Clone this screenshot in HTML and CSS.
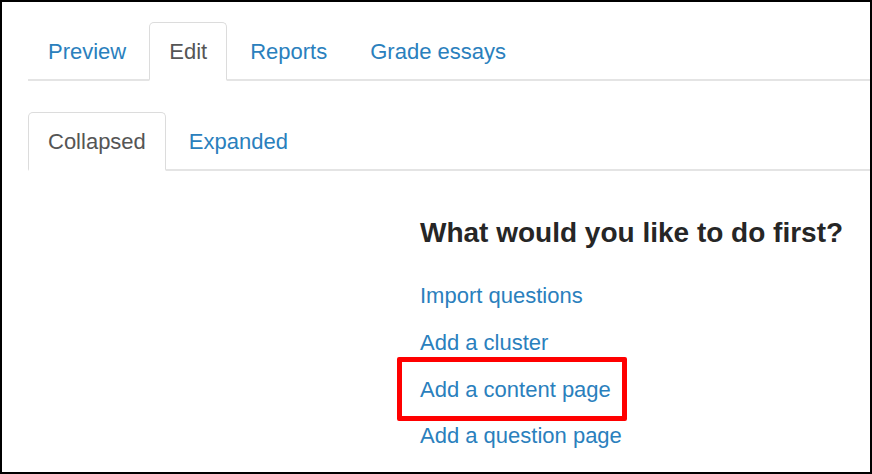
FILE: index.html
```html
<!DOCTYPE html>
<html lang="en">
<head>
<meta charset="utf-8">
<title>Lesson edit</title>
<link rel="stylesheet" href="styles.css">
</head>
<body>
<div class="frame">
  <ul class="tabs tabs-main">
    <li><a class="tab" href="#">Preview</a></li>
    <li><a class="tab active" href="#">Edit</a></li>
    <li><a class="tab" href="#">Reports</a></li>
    <li><a class="tab" href="#">Grade essays</a></li>
  </ul>
  <ul class="tabs tabs-sub">
    <li><a class="tab active" href="#">Collapsed</a></li>
    <li><a class="tab" href="#">Expanded</a></li>
  </ul>
  <div class="layout">
    <div class="side"></div>
    <div class="main">
      <h2 class="title">What would you like to do first?</h2>
      <div class="actions">
        <a class="action" href="#">Import questions</a>
        <a class="action" href="#">Add a cluster</a>
        <a class="action marked" href="#">Add a content page<span class="highlight"></span></a>
        <a class="action" href="#">Add a question page</a>
      </div>
    </div>
  </div>
</div>
</body>
</html>
```
FILE: styles.css
```css
html, body {
  margin: 0;
  padding: 0;
  background: #fff;
}

.frame {
  box-sizing: border-box;
  width: 872px;
  height: 474px;
  border: 2px solid #000;
  padding: 20px 0 0 26px;
  font-family: "Liberation Sans", Arial, sans-serif;
  overflow: hidden;
}

.tabs {
  list-style: none;
  margin: 0;
  padding: 0;
  display: flex;
  border-bottom: 2px solid #e4e4e4;
}

.tabs li {
  margin: 0 3px -2px 0;
}

.tabs-sub {
  margin-top: 31px;
}

.tab {
  display: block;
  padding: 12px 19px 11px;
  font-size: 22px;
  line-height: 33px;
  color: #2a80bd;
  text-decoration: none;
  border: 1px solid transparent;
  border-bottom: 2px solid transparent;
  border-radius: 5px 5px 0 0;
}

.tab.active {
  color: #555;
  border-color: #dcdcdc;
  border-bottom-color: #fff;
  background: #fff;
}

.layout {
  display: grid;
  grid-template-columns: 392px 1fr;
}

.title {
  margin: 47px 0 0;
  font-size: 28px;
  line-height: 30.8px;
  font-weight: bold;
  color: #262626;
}

.actions {
  display: flex;
  flex-direction: column;
  align-items: flex-start;
  gap: 14.67px;
  margin-top: 31.6px;
}

.action {
  display: block;
  font-size: 22px;
  line-height: 32px;
  color: #2a80bd;
  text-decoration: none;
}

.marked {
  position: relative;
}

.highlight {
  position: absolute;
  left: -23px;
  top: -17px;
  width: 230px;
  height: 64px;
  box-sizing: border-box;
  border: 5px solid #f00;
  border-radius: 2px;
}
```
